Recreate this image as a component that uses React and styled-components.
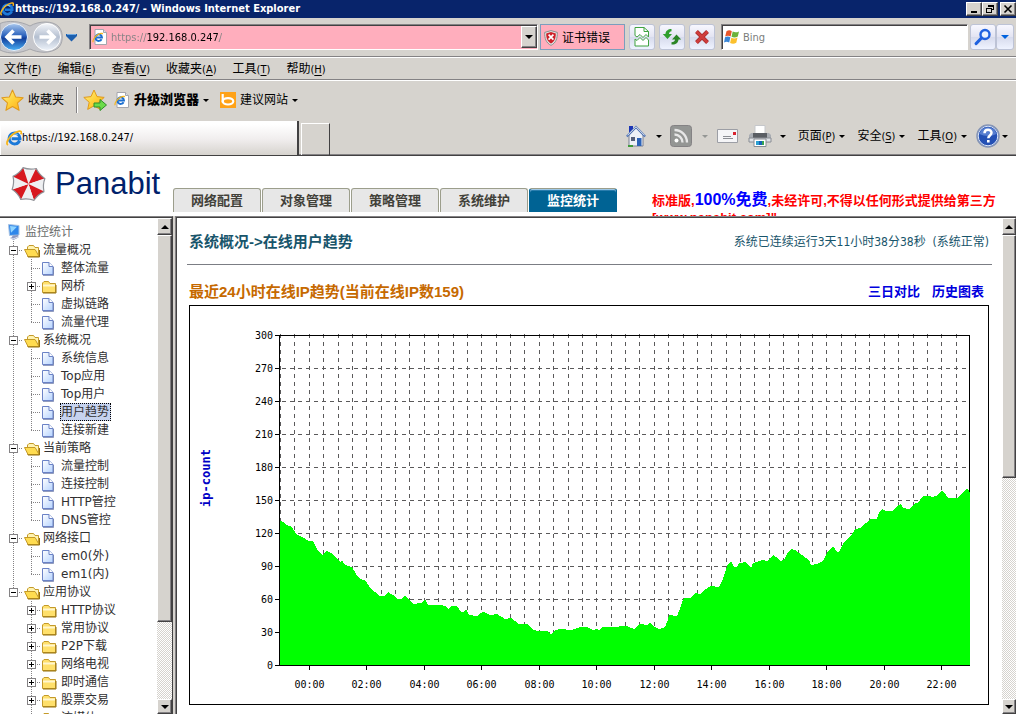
import React from 'react';
import styled, { createGlobalStyle, css } from 'styled-components';

const ui = '"DejaVu Sans Condensed", "DejaVu Sans", "Noto Sans CJK SC", sans-serif';
const wide = '"DejaVu Sans", "Noto Sans CJK SC", sans-serif';
const web = '"Liberation Sans", "Noto Sans CJK SC", sans-serif';

const face = '#d6d3ce';
const shadow = '#848284';
const dark = '#424142';

const GlobalStyle = createGlobalStyle`
  * {
    box-sizing: border-box;
  }

  body {
    margin: 0;
    background: #fff;
    overflow: hidden;
  }

  button {
    padding: 0;
    border: none;
    background: none;
    color: inherit;
    font: inherit;
    white-space: nowrap;
  }

  a {
    color: inherit;
    text-decoration: none;
  }

  svg {
    display: block;
    flex: none;
  }
`;

const Window = styled.div`
  display: flex;
  flex-direction: column;
  height: 100vh;
  font-family: ${ui};
  font-size: 12px;
  line-height: 18px;
  color: #000;
`;

/* title bar */

const TitleBar = styled.header`
  display: flex;
  align-items: center;
  flex: none;
  height: 18px;
  background: #08246b;
  color: #fff;
`;

const Title = styled.h1`
  flex: 1;
  margin: 0 0 0 1px;
  font-size: 11px;
  line-height: 18px;
`;

const raised = css`
  background: ${face};
  border: 1px solid;
  border-color: #fff ${dark} ${dark} #fff;
  box-shadow: inset -1px -1px ${shadow};
`;

const WindowButton = styled.button`
  display: flex;
  align-items: center;
  justify-content: center;
  width: 16px;
  height: 14px;
  margin-left: ${props => (props.$apart ? 2 : 0)}px;
  ${raised}
`;

/* address bar */

const AddressBar = styled.div`
  display: flex;
  align-items: center;
  flex: none;
  height: 39px;
  padding-right: 2px;
  background: ${face};
  border-bottom: 1px solid ${shadow};
`;

const History = styled.div`
  display: flex;
  align-items: center;
  width: 89px;
`;

const Field = styled.div`
  display: flex;
  align-items: center;
  flex: ${props => (props.$grow ? '1' : 'none')};
  width: 247px;
  height: 26px;
  padding-left: 2px;
  background: ${props => (props.$pink ? '#ffaebd' : '#fff')};
  border: 1px solid;
  border-color: ${shadow} #fff #fff ${shadow};
  box-shadow: inset 1px 1px ${dark};
`;

const TextInput = styled.input`
  flex: 1;
  min-width: 0;
  height: 22px;
  padding: 0;
  margin-left: 3px;
  border: none;
  outline: none;
  background: none;
  font-family: ${ui};
  font-size: 11px;

  &::placeholder {
    color: #7b7d7b;
    opacity: 1;
  }
`;

/* the host stays black while the rest of the url is dimmed */
const UrlInput = styled(TextInput)`
  background: linear-gradient(90deg, #848284 36px, #000 36px, #000 108px, #848284 108px);
  background-clip: text;
  -webkit-text-fill-color: transparent;
`;

const DropButton = styled.button`
  display: flex;
  align-items: center;
  justify-content: center;
  width: 16px;
  height: 22px;
  ${raised}
`;

const CertButton = styled.button`
  display: flex;
  align-items: center;
  width: 85px;
  height: 26px;
  margin: 0 4px 0 2px;
  padding: 2px 3px 0;
  gap: 4px;
  background: #ffaebd;
  border: 1px solid #7b9ebd;
`;

const ToolButton = styled.button`
  display: flex;
  align-items: center;
  justify-content: center;
  width: ${props => (props.$narrow ? 18 : 26)}px;
  height: 26px;
  margin-right: ${props => (props.$joined ? 0 : 4)}px;
  background: linear-gradient(#f7f7ff, #e3e4f2 50%, #d6daec 50%, #eff3ff);
  border: 1px solid #bdc3d6;
  border-radius: 3px;
`;

const SearchGap = styled.span`
  width: 2px;
`;

/* menu and favourites */

const MenuBar = styled.nav`
  display: flex;
  align-items: center;
  flex: none;
  gap: 16px;
  height: 23px;
  padding: 2px 0 0 4px;
  background: ${face};
  border-top: 1px solid #fff;
  border-bottom: 1px solid ${shadow};
`;

const Key = styled.span`
  font-size: 11px;

  u {
    text-underline-offset: 2px;
  }
`;

const FavoritesBar = styled.div`
  display: flex;
  align-items: center;
  flex: none;
  height: 41px;
  padding: 0 0 2px 1px;
  background: ${face};
  border-top: 1px solid #fff;
`;

const Favorite = styled.button`
  display: flex;
  align-items: center;
  gap: ${props => props.$gap || 4}px;
  margin-right: ${props => props.$after || 11}px;
  font-size: ${props => (props.$strong ? 13 : 12)}px;
  font-weight: ${props => (props.$strong ? 900 : 400)};
`;

const Divider = styled.span`
  width: 2px;
  height: 26px;
  margin-right: 5px;
  border-left: 1px solid ${shadow};
  border-right: 1px solid #fff;
`;

const TabRow = styled.div`
  display: flex;
  align-items: flex-end;
  flex: none;
  height: 35px;
  background: ${face};
  border-bottom: 1px solid ${dark};
  box-shadow: inset 0 -1px ${shadow};
`;

const BrowserTab = styled.button`
  display: flex;
  align-items: center;
  flex: 0 1 299px;
  height: 34px;
  padding-left: 5px;
  background: linear-gradient(#fff 10%, #f0eded 55%, ${face});
  border-left: 1px solid #fff;
  border-right: 2px solid ${dark};
  font-size: 11px;
`;

const NewTab = styled.button`
  width: 29px;
  height: 32px;
  margin-left: 2px;
  border: 1px solid #fff;
  border-right: 1px solid ${dark};
  border-bottom: none;
`;

const Commands = styled.div`
  display: flex;
  align-items: center;
  height: 34px;
  margin-left: auto;
  padding: 0 8px 4px 0;
`;

const Command = styled.button`
  display: flex;
  align-items: center;
  gap: ${props => props.$gap || 4}px;
  margin-left: ${props => props.$before || 12}px;
`;

/* site header */

const SiteHeader = styled.header`
  display: flex;
  flex: none;
  height: 60px;
  overflow: hidden;
`;

const Brand = styled.a`
  display: flex;
  align-items: center;
  gap: 8px;
  width: 173px;
  height: 56px;
  padding-left: 10px;
  color: #00216b;
  font-family: ${web};
  font-size: 31px;
  line-height: 40px;
`;

const SiteNav = styled.nav`
  display: flex;
  align-items: flex-end;
  gap: 1px;
  height: 56px;
`;

const SiteTab = styled.a`
  width: 88px;
  height: 24px;
  border: 1px solid #9c9e8c;
  border-bottom: none;
  border-radius: 3px 3px 0 0;
  background: #e7e7e7;
  color: #424139;
  font-size: 13px;
  font-weight: bold;
  line-height: 24px;
  text-align: center;

  ${props => props.$active && css`
    border-color: #9c9e8c #006394;
    background: #006394;
    box-shadow: inset 0 1px #9cc7e7, inset 0 2px #297dad;
    color: #fff;
  `}
`;

const Notice = styled.p`
  flex: 1;
  margin: 34px 0 0 35px;
  color: #f00;
  font-family: ${web};
  font-size: 13px;
  font-weight: bold;
  line-height: 20px;
  white-space: nowrap;

  span {
    display: block;
    line-height: 14px;
  }

  big {
    color: #00f;
    font-size: 16px;
  }
`;

/* frames */

const Frames = styled.div`
  display: flex;
  flex: 1;
  min-height: 0;
  gap: 2px;
  background: ${face};
`;

const Frame = styled.div`
  display: flex;
  flex: ${props => (props.$grow ? '1' : 'none')};
  width: 173px;
  min-width: 0;
  overflow: hidden;
  background: #fff;
  border-top: 1px solid ${shadow};
  box-shadow: inset 0 1px ${dark};
  padding-top: 1px;

  ${props => (props.$grow ? css`
    border-left: 1px solid ${shadow};
    box-shadow: inset 1px 1px ${dark};
    padding-left: 1px;
  ` : css`
    border-right: 1px solid ${dark};
  `)}
`;

const Track = styled.div`
  display: flex;
  flex-direction: column;
  flex: none;
  width: ${props => props.$width}px;
  background: repeating-conic-gradient(#fff 0 25%, ${face} 0 50%) 0 0 / 2px 2px;
`;

const ScrollButton = styled.button`
  display: flex;
  align-items: center;
  justify-content: center;
  flex: none;
  height: ${props => (props.$end ? 15 : 17)}px;
  margin-top: ${props => (props.$end ? 'auto' : 0)};
  ${raised}
`;

const Thumb = styled.div`
  flex: 0 0 ${props => props.$size}%;
  ${raised}
`;

/* tree */

const Tree = styled.nav`
  flex: 1;
  min-width: 0;
  padding: 5px 0 0 4px;
  overflow: hidden;
  color: #313031;
  font-family: ${wide};
`;

const TreeRow = styled.div`
  display: flex;
  align-items: center;
  height: 18px;
`;

const TreeLabel = styled.a`
  margin-left: 2px;
  padding-right: 1px;
  border: 1px dotted ${props => (props.$selected ? '#000' : 'transparent')};
  background: ${props => (props.$selected ? '#c6d3ef' : 'none')};
  color: ${props => (props.$muted ? '#6b6d6b' : 'inherit')};
  line-height: 16px;
  white-space: nowrap;
`;

/* content */

const Content = styled.main`
  flex: 1;
  min-width: 0;
  padding: 0 10px;
  overflow: hidden;
`;

const PageHead = styled.div`
  display: flex;
  align-items: center;
  justify-content: space-between;
  height: 47px;
  padding: 2px 3px 0 2px;
  border-bottom: 1px solid #7b7d84;
  color: #18556b;
`;

const PageTitle = styled.h2`
  margin: 0;
  font-family: ${web};
  font-size: 15px;
`;

const ChartHead = styled.div`
  display: flex;
  align-items: center;
  justify-content: space-between;
  padding: 17px 8px 3px 2px;
`;

const ChartTitle = styled.h3`
  margin: 0;
  color: #c66900;
  font-family: ${web};
  font-size: 15px;
  line-height: 20px;
`;

const ChartLinks = styled.div`
  display: flex;
  gap: 12px;
  color: #0000de;
  font-size: 13px;
  font-weight: bold;
`;

const Chart = styled.figure`
  margin: 0 3px 0 2px;

  svg {
    width: 100%;
    height: auto;
  }

  text {
    font-family: "DejaVu Sans Mono", monospace;
    font-size: 10px;
  }
`;

const AxisTitle = styled.text`
  && {
    font-size: 12px;
    font-weight: bold;
    fill: #0000c6;
  }
`;

const Arrow = ({ up, size = 6, color = '#000' }) => (
  <svg width={size} height={Math.ceil(size / 2)} viewBox="0 0 10 5">
    <path d={up ? 'M0 5h10L5 0z' : 'M0 0h10L5 5z'} fill={color} />
  </svg>
);

const IeLogo = ({ size = 16 }) => (
  <svg width={size} height={size} viewBox="0 0 16 16">
    <path d="M13.6 10.6A5.4 5.4 0 1 1 14 8.8H5.6" fill="none" stroke="#1c79d8" strokeWidth="3" />
    <path d="M4.600 6a4.500 4.500 0 0 1 7-1" fill="none" stroke="#7cc4ff" strokeWidth="1.200" />
    <path d="M2 15C-.8 13.500 2.500 7.500 7.200 4 10.800 1.200 15 .2 15.400 2.200c.1.8-.3 1.500-.8 2" fill="none" stroke="#f7b519" strokeWidth="1.700" />
  </svg>
);

const IePage = () => (
  <svg width="16" height="16" viewBox="0 0 16 16">
    <path d="M3 .5h8.500l3 3v12H3z" fill="#fff" stroke="#a5a6ad" />
    <path d="M11.500.5v3h3" fill="#dedfe7" stroke="#a5a6ad" />
    <path d="M9.600 10.200a3.300 3.300 0 1 1 .4-1.700H4.500" fill="none" stroke="#1c6fd0" strokeWidth="1.900" />
    <path d="M1.300 13.200C0 11.500 3 7.500 6 5.600c2-1.300 4.500-2 4.600-.4" fill="none" stroke="#f7b519" strokeWidth="1.200" />
  </svg>
);

const starPath = 'M11 1l3 6.600 7.200.8-5.400 4.900 1.500 7.100L11 16.800l-6.300 3.600 1.500-7.100L.8 8.400 8 7.600z';

const Star = ({ arrow }) => (
  <svg width={arrow ? 25 : 23} height="23" viewBox={arrow ? '0 0 25 23' : '0 0 22 22'}>
    <defs>
      <linearGradient id="star" x2="1" y2="1">
        <stop offset="0" stopColor="#fff08c" />
        <stop offset=".5" stopColor="#ffd23a" />
        <stop offset="1" stopColor="#ffa818" />
      </linearGradient>
    </defs>
    <path d={starPath} fill="url(#star)" stroke="#e09a1c" strokeLinejoin="round" />
    {arrow && <path d="M11 14h6v-3.500l6.500 5.500-6.500 5.500V18h-6z" fill="#6bdb4a" stroke="#2f8f2a" />}
  </svg>
);

const Bing = () => (
  <svg width="16" height="16" viewBox="0 0 16 16">
    <path d="M0 0h16v16H0z" fill="#ffa218" />
    <path d="M2.700 2v8.500" stroke="#fff" strokeWidth="2.200" />
    <ellipse cx="8" cy="9.300" rx="5.300" ry="3.200" fill="none" stroke="#fff" strokeWidth="2.200" />
  </svg>
);

const Flag = () => (
  <svg width="16" height="16" viewBox="0 0 16 16">
    <path d="M2.500 2.200c2-1.200 3.800-1 5.300 0L6.600 7.400c-1.700-1-3.400-1-5.400 0z" fill="#e8562a" />
    <path d="M8.700 2.600c2 1 4 1 6.300-.2l-1.200 5.200c-2.200 1.200-4.200 1.200-6.300.2z" fill="#6db33a" />
    <path d="M1 8.300c2-1.100 3.700-1 5.400 0l-1.200 5.200c-1.700-1-3.400-1-5.200 0z" fill="#3a86d6" />
    <path d="M7.300 8.800c2 1 4 1 6.200-.2l-1.200 5.200c-2.200 1.200-4.100 1.200-6.200.2z" fill="#fbc02d" />
  </svg>
);

const HistoryIcons = () => (
  <svg width="85" height="34" viewBox="0 0 85 34">
    <defs>
      <linearGradient id="back" x2="0" y2="1">
        <stop offset="0" stopColor="#a9c8ee" />
        <stop offset=".45" stopColor="#2d63bd" />
        <stop offset=".55" stopColor="#123f9c" />
        <stop offset="1" stopColor="#4ab0f5" />
      </linearGradient>
      <linearGradient id="forward" x2="0" y2="1">
        <stop offset="0" stopColor="#f4f6fa" />
        <stop offset=".5" stopColor="#b4bfd0" />
        <stop offset="1" stopColor="#eef3fa" />
      </linearGradient>
    </defs>
    <path d="M0 3.500C8 0 20 1 30 6 38 1 53 0 59 7c5 6 4 17-1 21-8 6-20 5-28 1-9 4-20 6-30 1z" fill="#c6c7cc" stroke="#a5a6ab" />
    <circle cx="14" cy="17" r="13.500" fill="url(#back)" stroke="#e9f1fb" />
    <circle cx="47" cy="17" r="13.500" fill="url(#forward)" stroke="#fff" />
    <path d="M13.500 10.500L7 17l6.500 6.500M7.500 17h14" fill="none" stroke="#fff" strokeWidth="3.600" />
    <path d="M47.500 10.500L54 17l-6.500 6.500M53.500 17h-14" fill="none" stroke="#fff" strokeWidth="3.600" />
    <path d="M66 14h11v2l-5.500 5.500L66 16z" fill="#1c5fae" />
    <path d="M67 14.500h9" stroke="#6ba6e0" />
  </svg>
);

const Shield = () => (
  <svg width="14" height="16" viewBox="0 0 14 16">
    <path d="M7 .6l6.300 1.800c.2 6-1.300 10.400-6.300 13C2 12.800.5 8.400.7 2.400z" fill="#e4e4e4" stroke="#8c8e8c" />
    <path d="M7 2l4.800 1.400c0 4.800-1.200 8-4.800 10.200C3.400 11.400 2.200 8.200 2.200 3.400z" fill="#ce2029" />
    <path d="M4.600 4.600l4.800 5M9.400 4.600l-4.800 5" stroke="#fff" strokeWidth="1.700" />
  </svg>
);

const BrokenPage = () => (
  <svg width="16" height="20" viewBox="0 0 16 20">
    <path d="M1 .5h9l4.500 4V10l-2.500-2.500-3 3-3-3L3 10 1 8.500z" fill="#fff" stroke="#3fa33f" />
    <path d="M10 .5v4h4.500" fill="none" stroke="#3fa33f" />
    <path d="M1 12l2 1.500 3-3 3 3 3-3 2.500 2.500v6H1z" fill="#fff" stroke="#3fa33f" />
  </svg>
);

const Refresh = () => (
  <svg width="20" height="18" viewBox="0 0 20 18">
    <path d="M9.500 1C6 1 3.500 3 3.500 6H.8l4.700 5 4.500-5H7c0-1.500 1-2.500 2.500-2.800z" fill="#2f9e2c" />
    <path d="M9.500 16.500c4 .5 6.800-1.700 7-5h2.700L14.500 6.500 10 11.500h3c-.2 1.700-1.300 2.700-3.500 2.800z" fill="#2a8526" />
  </svg>
);

const Stop = () => (
  <svg width="16" height="16" viewBox="0 0 16 16">
    <path d="M2.500 2.500l11 11M13.500 2.500l-11 11" stroke="#a52a2a" strokeWidth="4" />
    <path d="M2.500 2.500l11 11M13.500 2.500l-11 11" stroke="#cf3c3c" strokeWidth="2.600" />
  </svg>
);

const Magnifier = () => (
  <svg width="18" height="18" viewBox="0 0 18 18">
    <circle cx="11" cy="6.500" r="4.500" fill="#eaf3ff" stroke="#1f62e0" strokeWidth="2.400" />
    <path d="M7.500 10L2.200 15.500" stroke="#1f62e0" strokeWidth="3.200" strokeLinecap="round" />
  </svg>
);

const Home = () => (
  <svg width="20" height="22" viewBox="0 0 20 22">
    <path d="M3 1h4v7H3z" fill="#1c35b5" />
    <path d="M3 10l7-7 7 7v11H3z" fill="#eef1f7" stroke="#7b8094" />
    <path d="M.8 11.500L10 2l9.200 9.500" fill="none" stroke="#5577b5" strokeWidth="2.200" />
    <path d="M1.500 10.300L10 1.800l8.500 8.500" fill="none" stroke="#dfe5f0" />
    <path d="M11 13h4.500v8H11z" fill="#2b62b8" />
    <path d="M5 12h4v4H5z" fill="#56607a" />
    <path d="M2 21h5" stroke="#3f9a3a" strokeWidth="2" />
  </svg>
);

const Rss = () => (
  <svg width="22" height="22" viewBox="0 0 22 22">
    <rect x=".5" y=".5" width="21" height="21" rx="3" fill="#949694" stroke="#848284" />
    <circle cx="6.500" cy="15.500" r="2" fill="#fff" />
    <path d="M4.500 9.500a8 8 0 0 1 8 8M4.500 5a12.500 12.500 0 0 1 12.500 12.500" fill="none" stroke="#e7e7e7" strokeWidth="2.300" />
  </svg>
);

const Mail = () => (
  <svg width="22" height="15" viewBox="0 0 22 15">
    <path d="M.5.500h20v13H.5z" fill="#f5f5f7" stroke="#9c9ea5" />
    <path d="M16 3h3v3h-3z" fill="#d9242e" />
    <path d="M6 7.500h8M6 9.500h10" stroke="#8c8e94" />
  </svg>
);

const Printer = () => (
  <svg width="24" height="22" viewBox="0 0 24 22">
    <path d="M7 .5h10v8H7z" fill="#fff" stroke="#c5c7cb" />
    <path d="M1 10l2-2h18l2 2v7H1z" fill="#a9adb3" />
    <path d="M5 8h14v5H5z" fill="#5a5e64" />
    <path d="M1 13h22v4H1z" fill="#dfe2e6" stroke="#888c93" />
    <path d="M6 14h12v7.500H6z" fill="#fff" stroke="#888c93" />
    <path d="M8 16h3v4H8z" fill="#2b9fd0" />
    <path d="M11 16h3v4h-3z" fill="#1860b8" />
    <path d="M14 16h2v4h-2z" fill="#35a552" />
  </svg>
);

const Help = () => (
  <svg width="24" height="24" viewBox="0 0 24 24">
    <circle cx="12" cy="12" r="11" fill="#2450b4" stroke="#8695b5" strokeWidth="1.500" />
    <circle cx="12" cy="12" r="9.800" fill="none" stroke="#dfe8f8" />
    <path d="M3.500 10a8.700 8.700 0 0 1 17 0c-5 2.500-12 2.500-17 0z" fill="#6d92dc" opacity=".7" />
    <path d="M8.500 9.200c0-4.600 7-4.400 7-.4 0 2.700-3.200 2.600-3.200 5.400" fill="none" stroke="#fff" strokeWidth="2.500" />
    <path d="M11 16h2.600v2.500H11z" fill="#fff" />
  </svg>
);

/* eight panels, red on the diagonals */
const Umbrella = () => (
  <svg width="37" height="36" viewBox="-18.500 -18 37 36">
    {[4, 49, 94, 139, 184, 229, 274, 319].map((angle, i) => (
      <path
        key={angle}
        d="M0 0L-6.800 -16Q0 -14 6.800 -16z"
        transform={`rotate(${angle})`}
        fill={i % 2 ? '#d71920' : '#eff0f2'}
      />
    ))}
    {[4, 49, 94, 139, 184, 229, 274, 319].map(angle => (
      <path
        key={angle}
        d="M-6.800 -16Q0 -14 6.800 -16"
        transform={`rotate(${angle})`}
        fill="none"
        stroke="#8f9298"
        strokeWidth="1.200"
      />
    ))}
  </svg>
);

const Monitor = () => (
  <svg width="18" height="18" viewBox="0 0 18 18">
    <path d="M4.500 1.500l10.500 1v9.500l-9.500.5z" fill="#2e86ea" stroke="#a9c4e4" />
    <path d="M6 3l7 .7-6 6z" fill="#8fd4ff" />
    <path d="M9 12.500l5-.5.5 2.500-5 2.500-3-1.500z" fill="#8d98c0" />
    <path d="M6 14.500l3 1.500 5-2" fill="none" stroke="#dfe5f2" />
  </svg>
);

const Folder = ({ open }) => (
  <svg width="18" height="18" viewBox="0 0 18 18">
    {open ? (
      <>
        <path d="M5.500 15.500V6l1.500-1.500h4.500L13 6.500h3.500v9z" fill="#fff3b0" stroke="#c49a2a" />
        <path d="M6 15.500L2.500 8.500h10.500l1 1.500 3 5.500z" fill="#ffdc50" stroke="#c49a2a" />
        <path d="M6 16h11.500V9" fill="none" stroke="#94700c" />
      </>
    ) : (
      <>
        <path d="M2.500 15.500V6L4 4.500h4.500L10 6.500h5.500v9z" fill="#ffe06b" stroke="#c49a2a" />
        <path d="M3 8.500h12" stroke="#fff6cf" strokeWidth="2" />
        <path d="M3 16h13V8" fill="none" stroke="#94700c" />
      </>
    )}
  </svg>
);

const Page = () => (
  <svg width="18" height="18" viewBox="0 0 18 18">
    <defs>
      <linearGradient id="page" x2="1" y2="1">
        <stop offset="0" stopColor="#fff" />
        <stop offset="1" stopColor="#b5d3ff" />
      </linearGradient>
    </defs>
    <path d="M2.500 3.500h6.500l4 4v8h-10.500z" fill="url(#page)" stroke="#6b82c6" />
    <path d="M9 3.500v4h4" fill="#fff" stroke="#6b82c6" />
    <path d="M3 16.500h10.500V8" fill="none" stroke="#4a5c94" opacity=".6" />
  </svg>
);

const dots = { stroke: '#848284', strokeDasharray: '1 1', shapeRendering: 'crispEdges' };

/* kind: line, branch, last or blank; sign: + or - for a row that opens */
const Gutter = ({ kind, sign }) => (
  <svg width="18" height="18" viewBox="0 0 18 18">
    {kind !== 'blank' && <path d={kind === 'last' ? 'M9.500 0v9' : 'M9.500 0v18'} {...dots} />}
    {(kind === 'branch' || kind === 'last') && <path d="M9 9.500h11" {...dots} />}
    {sign && (
      <g shapeRendering="crispEdges">
        <path d="M5.500 5.500h8v8h-8z" fill="#fff" stroke="#848284" />
        <path d={sign === '+' ? 'M7 9.500h5M9.500 7v5' : 'M7 9.500h5'} stroke="#000" />
      </g>
    )}
  </svg>
);

const groups = [
  { name: '流量概况', items: ['整体流量', '+网桥', '虚拟链路', '流量代理'] },
  { name: '系统概况', items: ['系统信息', 'Top应用', 'Top用户', '用户趋势', '连接新建'] },
  { name: '当前策略', items: ['流量控制', '连接控制', 'HTTP管控', 'DNS管控'] },
  { name: '网络接口', items: ['em0(外)', 'em1(内)'] },
  {
    name: '应用协议',
    items: ['+HTTP协议', '+常用协议', '+P2P下载', '+网络电视', '+即时通信', '+股票交易', '+流媒体', '+其它协议'],
  },
];

const SideTree = () => (
  <Tree>
    <TreeRow>
      <Monitor />
      <TreeLabel href="#" $muted>监控统计</TreeLabel>
    </TreeRow>
    {groups.map((group, g) => {
      const lastGroup = g === groups.length - 1;
      return (
        <React.Fragment key={group.name}>
          <TreeRow>
            <Gutter kind={lastGroup ? 'last' : 'branch'} sign="-" />
            <Folder open />
            <TreeLabel href="#">{group.name}</TreeLabel>
          </TreeRow>
          {group.items.map((item, i) => {
            const folder = item[0] === '+';
            const label = folder ? item.slice(1) : item;
            return (
              <TreeRow key={item}>
                <Gutter kind={lastGroup ? 'blank' : 'line'} />
                <Gutter kind={i === group.items.length - 1 ? 'last' : 'branch'} sign={folder && '+'} />
                {folder ? <Folder /> : <Page />}
                <TreeLabel href="#" $selected={label === '用户趋势'}>{label}</TreeLabel>
              </TreeRow>
            );
          })}
        </React.Fragment>
      );
    })}
  </Tree>
);

/* [offset along the day, height of the column] */
const samples = [
  [0, 144], [3, 143], [6, 140], [12, 138], [16, 131], [22, 128], [29, 124], [33, 124], [37, 116], [42, 110],
  [47, 114], [53, 111], [57, 106], [60, 103], [62, 105], [65, 100], [72, 98], [76, 91], [80, 86], [86, 84],
  [90, 77], [100, 69], [105, 69], [108, 73], [113, 70], [117, 66], [121, 66], [125, 69], [129, 66], [133, 61],
  [141, 62], [145, 66], [148, 60], [160, 60], [165, 59], [168, 56], [172, 59], [177, 59], [181, 53], [184, 53],
  [186, 56], [189, 50], [197, 49], [200, 52], [204, 53], [210, 50], [217, 51], [225, 46], [231, 47], [239, 41],
  [247, 41], [253, 35], [259, 34], [267, 34], [270, 31], [273, 32], [275, 35], [280, 36], [291, 35], [300, 38],
  [307, 38], [313, 35], [316, 36], [319, 35], [323, 38], [337, 38], [340, 39], [347, 39], [354, 36], [357, 38],
  [359, 41], [368, 40], [370, 43], [372, 40], [375, 38], [379, 36], [385, 38], [388, 45], [389, 50], [397, 49],
  [400, 56], [403, 65], [404, 67], [411, 67], [415, 72], [420, 71], [426, 76], [431, 79], [439, 78], [443, 86],
  [447, 99], [451, 104], [454, 98], [457, 98], [459, 102], [466, 103], [471, 97], [473, 102], [482, 105], [487, 104],
  [493, 110], [496, 108], [500, 104], [504, 105], [508, 113], [511, 116], [515, 115], [519, 112], [529, 105], [531, 100],
  [537, 101], [543, 104], [547, 112], [553, 119], [557, 113], [559, 113], [563, 121], [567, 126], [571, 129], [575, 136],
  [580, 137], [591, 146], [597, 146], [599, 152], [602, 156], [606, 154], [612, 154], [618, 160], [621, 161], [623, 157],
  [629, 156], [635, 162], [638, 162], [643, 169], [648, 169], [653, 168], [658, 170], [661, 174], [664, 173], [668, 167],
  [677, 167], [683, 173], [687, 176], [690, 174],
];

const plot = { left: 91, right: 781, top: 31, bottom: 360 };
const area = samples.map(([x, h]) => `${plot.left + x},${plot.bottom - h}`).join(' ');
const columns = Array.from({ length: 48 }, (_, i) => Math.round(91 + i * 14.375) + 0.5);
const counts = [0, 30, 60, 90, 120, 150, 180, 210, 240, 270, 300];
const hours = ['00', '02', '04', '06', '08', '10', '12', '14', '16', '18', '20', '22'];

const TrendChart = () => (
  <Chart>
    <svg viewBox="0 0 800 400" role="img" aria-label="ip-count">
      <g fill="none" shapeRendering="crispEdges">
        <path d="M.5.500h799v399H.5z" stroke="#000" />
        <g stroke="#5a595a" strokeDasharray="4 4">
          {columns.map(x => <path key={x} d={`M${x} 29v331`} />)}
          {counts.slice(1, -1).map(n => <path key={n} d={`M93 ${360.5 - n * 1.1}h688`} />)}
        </g>
        <polygon
          points={`${plot.left},${plot.bottom} ${area} ${plot.right},${plot.bottom}`}
          fill="#0f0"
        />
        <path d="M90.500 360.500V30.500h690v156M90 360.500h691" stroke="#000" />
        {counts.map(n => <path key={n} d={`M86 ${360.5 - n * 1.1}h4`} stroke="#000" />)}
        {hours.map((h, i) => <path key={h} d={`M${columns[2 + i * 4]} 361v4`} stroke="#000" />)}
      </g>
      {counts.map(n => <text key={n} x="84" y={364 - n * 1.1} textAnchor="end">{n}</text>)}
      {hours.map((h, i) => (
        <text key={h} x={columns[2 + i * 4]} y="383" textAnchor="middle">{h}:00</text>
      ))}
      <AxisTitle transform="translate(21 173) rotate(-90)" textAnchor="middle">ip-count</AxisTitle>
    </svg>
  </Chart>
);

const ScrollBar = ({ width, size }) => (
  <Track $width={width}>
    <ScrollButton aria-label="up"><Arrow up size={8} /></ScrollButton>
    <Thumb $size={size} />
    <ScrollButton $end aria-label="down"><Arrow size={8} /></ScrollButton>
  </Track>
);

const menus = [['文件', 'F'], ['编辑', 'E'], ['查看', 'V'], ['收藏夹', 'A'], ['工具', 'T'], ['帮助', 'H']];
const commands = [['页面', 'P'], ['安全', 'S'], ['工具', 'O']];
const siteTabs = ['网络配置', '对象管理', '策略管理', '系统维护', '监控统计'];

export default () => (
  <Window>
    <GlobalStyle />

    <TitleBar>
      <IeLogo size={14} />
      <Title>https://192.168.0.247/ - Windows Internet Explorer</Title>
      <WindowButton aria-label="minimize">
        <svg width="10" height="10" viewBox="0 0 10 10"><path d="M2 8h6" stroke="#000" strokeWidth="2" /></svg>
      </WindowButton>
      <WindowButton aria-label="restore">
        <svg width="10" height="10" viewBox="0 0 10 10" shapeRendering="crispEdges">
          <path d="M3 1.500h6M3.500 1v2M8.500 1v5M7 5.500h2M1 4.500h6M1.500 4v5M6.500 4v5M1 8.500h6M3 2.500h6" stroke="#000" fill="none" />
        </svg>
      </WindowButton>
      <WindowButton $apart aria-label="close">
        <svg width="10" height="10" viewBox="0 0 10 10"><path d="M1.500 1.500l7 7M8.500 1.500l-7 7" stroke="#000" strokeWidth="1.600" /></svg>
      </WindowButton>
    </TitleBar>

    <AddressBar>
      <History><HistoryIcons /></History>
      <Field $grow $pink>
        <IePage />
        <UrlInput aria-label="address" defaultValue="https://192.168.0.247/" />
        <DropButton aria-label="history"><Arrow size={8} /></DropButton>
      </Field>
      <CertButton><Shield />证书错误</CertButton>
      <ToolButton aria-label="compatibility"><BrokenPage /></ToolButton>
      <ToolButton aria-label="refresh"><Refresh /></ToolButton>
      <ToolButton aria-label="stop"><Stop /></ToolButton>
      <SearchGap />
      <Field>
        <Flag />
        <TextInput aria-label="search" placeholder="Bing" />
      </Field>
      <SearchGap />
      <ToolButton $joined aria-label="go"><Magnifier /></ToolButton>
      <ToolButton $joined $narrow aria-label="providers"><Arrow size={8} color="#0063de" /></ToolButton>
    </AddressBar>

    <MenuBar>
      {menus.map(([name, key]) => (
        <button key={key}>{name}<Key>(<u>{key}</u>)</Key></button>
      ))}
    </MenuBar>

    <FavoritesBar>
      <Favorite $after={12}><Star />收藏夹</Favorite>
      <Divider />
      <Favorite $after={6} aria-label="add"><Star arrow /></Favorite>
      <Favorite $strong><IePage />升级浏览器<Arrow /></Favorite>
      <Favorite><Bing />建议网站<Arrow /></Favorite>
    </FavoritesBar>

    <TabRow>
      <BrowserTab><IeLogo />https://192.168.0.247/</BrowserTab>
      <NewTab aria-label="new tab" />
      <Commands>
        <Command $gap={10} aria-label="home"><Home /><Arrow /></Command>
        <Command $gap={10} $before={8} aria-label="feeds"><Rss /><Arrow color="#949694" /></Command>
        <Command $before={9} aria-label="mail"><Mail /></Command>
        <Command $gap={8} $before={9} aria-label="print"><Printer /><Arrow /></Command>
        {commands.map(([name, key]) => (
          <Command key={key}><span>{name}<Key>(<u>{key}</u>)</Key></span><Arrow /></Command>
        ))}
        <Command $gap={2} $before={9} aria-label="help"><Help /><Arrow /></Command>
      </Commands>
    </TabRow>

    <SiteHeader>
      <Brand href="#"><Umbrella />Panabit</Brand>
      <SiteNav>
        {siteTabs.map(name => (
          <SiteTab key={name} href="#" $active={name === '监控统计'}>{name}</SiteTab>
        ))}
      </SiteNav>
      <Notice>
        标准版,<big>100%免费</big>,未经许可,不得以任何形式提供给第三方
        <span>[www.panabit.com]"</span>
      </Notice>
    </SiteHeader>

    <Frames>
      <Frame>
        <SideTree />
        <ScrollBar width={15} size={78} />
      </Frame>
      <Frame $grow>
        <Content>
          <PageHead>
            <PageTitle>系统概况-&gt;在线用户趋势</PageTitle>
            <span>系统已连续运行3天11小时38分38秒&nbsp; (系统正常)</span>
          </PageHead>
          <ChartHead>
            <ChartTitle>最近24小时在线IP趋势(当前在线IP数159)</ChartTitle>
            <ChartLinks>
              <a href="#">三日对比</a>
              <a href="#">历史图表</a>
            </ChartLinks>
          </ChartHead>
          <TrendChart />
        </Content>
        <ScrollBar width={14} size={49} />
      </Frame>
    </Frames>
  </Window>
);
